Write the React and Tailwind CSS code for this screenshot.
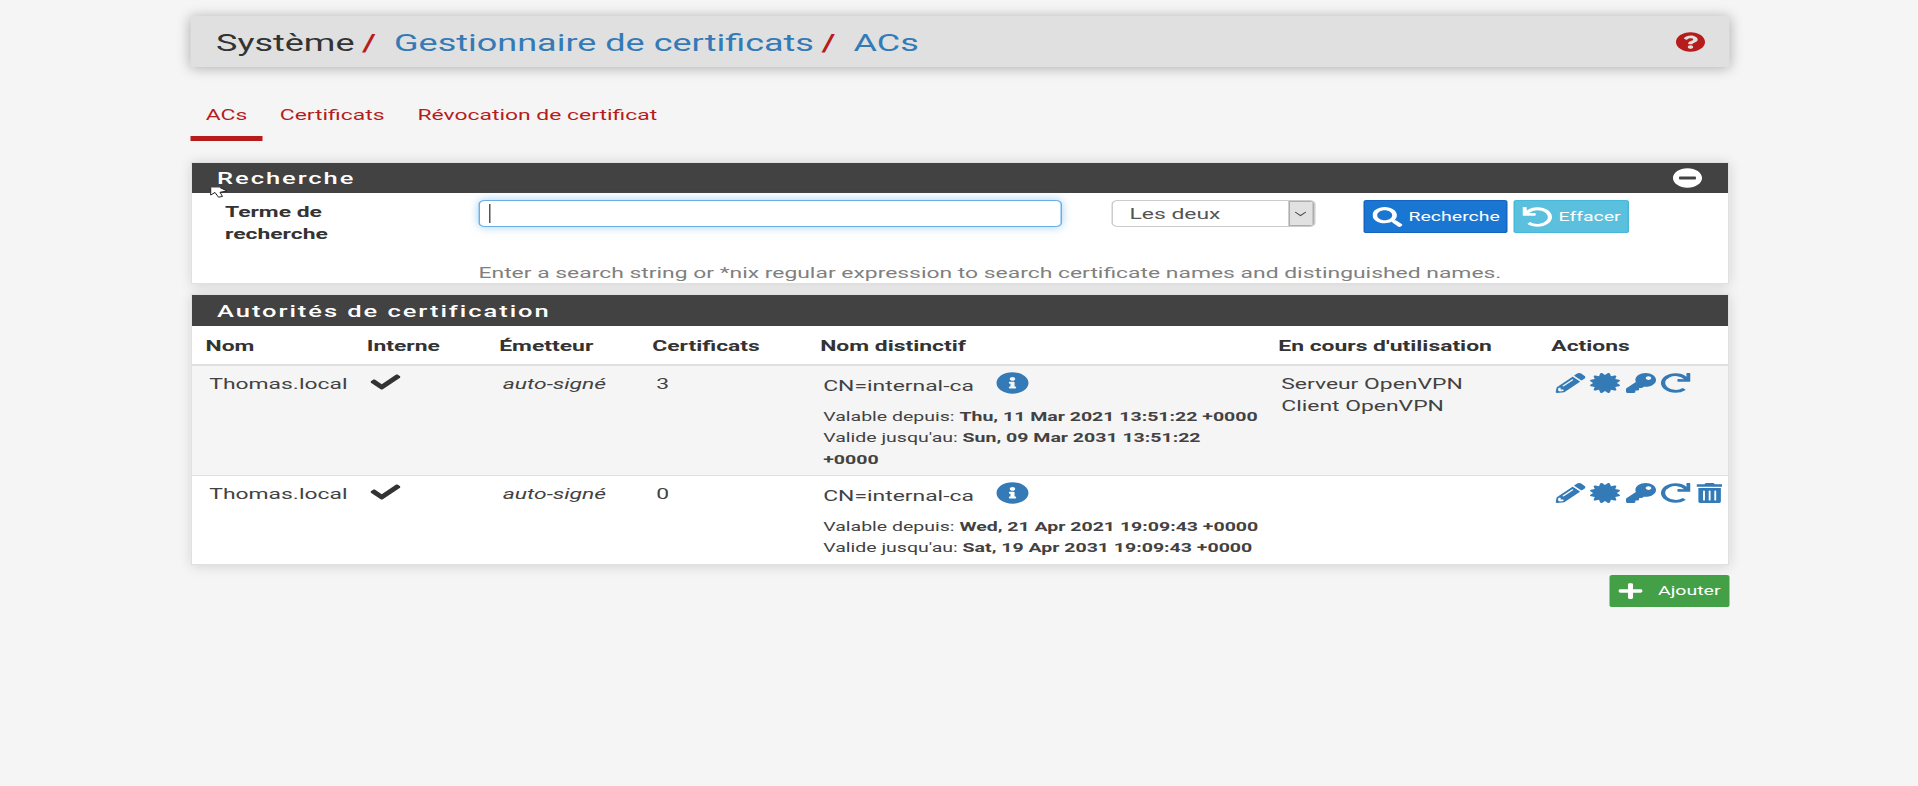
import React from "react";
import {
  FaCertificate,
  FaCheck,
  FaInfoCircle,
  FaKey,
  FaMinusCircle,
  FaPencilAlt,
  FaPlus,
  FaQuestionCircle,
  FaRedo,
  FaSearch,
  FaTrashAlt,
  FaUndo,
} from "react-icons/fa";

const rows = [
  {
    cn: "CN=internal-ca",
    certs: "3",
    from: "Thu, 11 Mar 2021 13:51:22 +0000",
    to: "Sun, 09 Mar 2031 13:51:22 +0000",
    use: ["Serveur OpenVPN", "Client OpenVPN"],
    removable: false,
    box: "h-[109px] bg-[#f5f5f5]",
  },
  {
    cn: "CN=internal-ca",
    certs: "0",
    from: "Wed, 21 Apr 2021 19:09:43 +0000",
    to: "Sat, 19 Apr 2031 19:09:43 +0000",
    use: [],
    removable: true,
    box: "h-[89px] border-t border-[#e0e0e0] bg-white",
  },
];

const columns =
  "grid grid-cols-[107.5px_88.3px_102px_112px_305.4px_182px_1fr] pl-[9px]";

function Panel({ title, action, children, headerClass, bodyClass }) {
  return (
    <section className="border border-[#e0e0e0] bg-white shadow-[0_1px_10px_rgba(0,0,0,0.15)]">
      <header
        className={`flex items-center justify-between bg-[#424242] pr-[17px] pl-[16.7px] text-white ${headerClass}`}
      >
        <h2 className="text-[17px] leading-[30px] font-medium tracking-[1.3px]">
          {title}
        </h2>
        {action}
      </header>
      <div className={bodyClass}>{children}</div>
    </section>
  );
}

function Row({ row }) {
  return (
    <div className={`${columns} ${row.box} pt-[8px]`}>
      <div className="pl-[2.5px]">Thomas.local</div>
      <div className="pl-[2px] text-[#333]">
        <FaCheck className="-mt-[2px] h-[20px] w-[20px]" />
      </div>
      <div className="pl-[2.3px] italic">auto-signé</div>
      <div className="pl-[2.7px]">{row.certs}</div>
      <div className="pl-[2px]">
        <div className="flex pt-[2px]">
          {row.cn}
          <FaInfoCircle className="-mt-[4px] ml-[15px] size-[22px] text-[#337ab7]" />
        </div>
        <div className="mt-[8px] w-[288px] text-[13px] leading-[21.6px]">
          <p className="whitespace-nowrap">
            Valable depuis: <b className="font-bold">{row.from}</b>
          </p>
          <p>
            Valide jusqu'au: <b className="font-bold">{row.to}</b>
          </p>
        </div>
      </div>
      <div className="pl-[2px]">
        {row.use.map((item) => (
          <div key={item}>{item}</div>
        ))}
      </div>
      <div className="-mt-[1.5px] flex gap-[3.5px] pl-[2.5px] text-[#337ab7]">
        <FaPencilAlt className="size-[20px] shrink-0" />
        <FaCertificate className="size-[20px] shrink-0" />
        <FaKey className="size-[20px] shrink-0" />
        <FaRedo className="size-[20px] shrink-0" />
        {row.removable && (
          <FaTrashAlt className="h-[20px] w-[17.5px] shrink-0" />
        )}
      </div>
    </div>
  );
}

export default function App() {
  return (
    <div className="relative h-[786px] w-full overflow-hidden bg-[#f5f5f5]">
      <div className="h-[786px] w-[1280px] origin-top-left scale-x-150 pt-[16px] pl-[127px] font-['Roboto',sans-serif] text-[15.25px] leading-[21.6px] text-[#424242]">
        <div className="w-[1026px]">
          <header className="flex h-[51px] items-center justify-between rounded-[2px] bg-[#e0e0e0] pr-[16px] pl-[17px] shadow-[0_1px_10px_rgba(0,0,0,0.3)]">
            <h1 className="flex pt-[4px] text-[24px] leading-[49px] text-[#333]">
              <span>Système</span>
              <span className="mr-[12px] ml-[5px] font-medium text-[#b71c1c]">
                /
              </span>
              <span className="text-[#337ab7]">Gestionnaire de certificats</span>
              <span className="mr-[12px] ml-[5px] font-medium text-[#b71c1c]">
                /
              </span>
              <span className="text-[#337ab7]">ACs</span>
            </h1>
            <FaQuestionCircle className="size-[20px] text-[#b71c1c]" />
          </header>

          <nav className="mt-[21px] flex h-[53px] leading-[55px] text-[#b71c1c]">
            <span className="h-full w-[48px] border-b-[5px] border-[#b71c1c] text-center">
              ACs
            </span>
            <span className="ml-[11.5px]">Certificats</span>
            <span className="ml-[22px]">Révocation de certificat</span>
          </nav>

          <div className="mt-[21px] flex flex-col gap-[10px]">
            <Panel
              title="Recherche"
              action={<FaMinusCircle className="size-[20px]" />}
              headerClass="h-[30px]"
              bodyClass="h-[90px] pt-[7px]"
            >
              <div className="flex h-[57px]">
                <div className="w-[192px] pt-[2px] pl-[22px] font-bold text-[#333]">
                  Terme de
                  <br />
                  recherche
                </div>
                <div className="ml-[-1px] h-[27px] w-[389px] rounded-[4px] border border-[#66afe9] shadow-[0_0_8px_rgba(102,175,233,0.6)]">
                  <div className="mt-[3px] ml-[6px] h-[19px] w-px bg-[#555]" />
                </div>
                <div className="ml-[33px] flex h-[27px] w-[136px] justify-between overflow-hidden rounded-[4px] border border-[#ccc] pl-[11px] leading-[26px] text-[#555]">
                  Les deux
                  <div className="flex w-[17px] items-center justify-center border border-[#adadad] bg-[#e1e1e1] pr-px">
                    <svg
                      viewBox="0 0 10 6"
                      className="h-[6px] w-[8px] fill-none stroke-[#444]"
                    >
                      <path d="M0.5 0.5 5 5 9.5 0.5" />
                    </svg>
                  </div>
                </div>
                <div className="ml-[32px] flex h-[33px] w-[96px] items-center rounded-[2px] border border-[#1565c0] bg-[#1976d2] pl-[5px] text-[13px] text-white">
                  <FaSearch className="mr-[4px] size-[20px] shrink-0" />
                  Recherche
                </div>
                <div className="ml-[4px] flex h-[33px] w-[77px] items-center rounded-[2px] border border-[#46b8da] bg-[#5bc0de] pl-[5px] text-[13px] text-white">
                  <FaUndo className="mr-[4px] size-[20px] shrink-0" />
                  Effacer
                </div>
              </div>
              <p className="pt-[6px] pl-[191px] text-[#808080]">
                Enter a search string or *nix regular expression to search
                certificate names and distinguished names.
              </p>
            </Panel>

            <Panel
              title="Autorités de certification"
              headerClass="h-[31px]"
              bodyClass=""
            >
              <div
                className={`${columns} h-[40px] border-b-2 border-[#e0e0e0] pt-[10px] font-bold text-[#333]`}
              >
                <span>Nom</span>
                <span>Interne</span>
                <span>Émetteur</span>
                <span>Certificats</span>
                <span>Nom distinctif</span>
                <span>En cours d'utilisation</span>
                <span>Actions</span>
              </div>
              {rows.map((row) => (
                <Row key={row.from} row={row} />
              ))}
            </Panel>
          </div>

          <div className="mt-[10px] flex justify-end">
            <div className="flex h-[32px] w-[80px] items-center rounded-[2px] border border-[#43a047] bg-[#43a047] pl-[4px] text-[13px] text-white">
              <FaPlus className="mr-[9.3px] size-[18px] shrink-0" />
              Ajouter
            </div>
          </div>
        </div>
      </div>
      <svg
        viewBox="0 0 18 11"
        className="absolute top-[187px] left-[210px] h-[11px] w-[18px] fill-white stroke-[#222]"
      >
        <path d="M0.7 0.5V8L5 5.5l3.5 4.7 4-.8L10 5.3l7-1.3L10 .5" />
      </svg>
    </div>
  );
}
